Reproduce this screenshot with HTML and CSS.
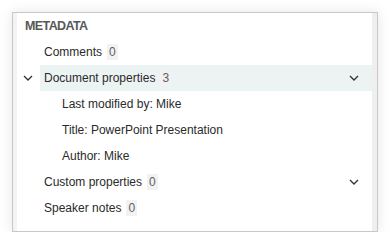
FILE: index.html
```html
<!DOCTYPE html>
<html>
<head>
<meta charset="utf-8">
<link rel="stylesheet" href="styles.css">
</head>
<body>
<div class="panel">
  <div class="inner">
    <div class="heading">METADATA</div>
    <div class="row">
      <span class="toggle"></span>
      <div class="item"><span class="label">Comments</span><span class="badge">0</span></div>
    </div>
    <div class="row">
      <span class="toggle"><svg width="10" height="6" viewBox="0 0 10 6"><path d="M1 1l4 4 4-4" fill="none" stroke="#323130" stroke-width="1.3"/></svg></span>
      <div class="item selected"><span class="label">Document properties</span><span class="badge">3</span>
        <span class="chev"><svg width="10" height="6" viewBox="0 0 10 6"><path d="M1 1l4 4 4-4" fill="none" stroke="#323130" stroke-width="1.3"/></svg></span>
      </div>
    </div>
    <div class="row sub"><span class="toggle"></span><div class="item"><span class="label">Last modified by: Mike</span></div></div>
    <div class="row sub"><span class="toggle"></span><div class="item"><span class="label">Title: PowerPoint Presentation</span></div></div>
    <div class="row sub"><span class="toggle"></span><div class="item"><span class="label">Author: Mike</span></div></div>
    <div class="row">
      <span class="toggle"></span>
      <div class="item"><span class="label">Custom properties</span><span class="badge">0</span>
        <span class="chev"><svg width="10" height="6" viewBox="0 0 10 6"><path d="M1 1l4 4 4-4" fill="none" stroke="#323130" stroke-width="1.3"/></svg></span>
      </div>
    </div>
    <div class="row">
      <span class="toggle"></span>
      <div class="item"><span class="label">Speaker notes</span><span class="badge">0</span></div>
    </div>
  </div>
</div>
</body>
</html>
```
FILE: styles.css
```css
html, body {
  margin: 0;
  padding: 0;
  background: #ffffff;
}
body {
  font-family: "Liberation Sans", Arial, sans-serif;
  font-size: 12px;
  color: #2b2a29;
}
.panel {
  margin: 12px 0 0 12px;
  width: 364px;
  height: 218px;
  border: 1px solid #c8c8c8;
  box-shadow: 0 0 12px rgba(0, 0, 0, 0.10);
  background: #ffffff;
}
.inner {
  height: 100%;
  box-sizing: border-box;
  border-left: 4px solid #f3f3f3;
  border-right: 5px solid #efefef;
}
.heading {
  height: 26px;
  line-height: 27px;
  padding-left: 8px;
  font-weight: bold;
  color: #585858;
  font-size: 12.5px;
  letter-spacing: -0.6px;
}
.row {
  display: flex;
  height: 26px;
}
.toggle {
  width: 22px;
  flex: none;
  display: flex;
  align-items: center;
  justify-content: center;
  padding-right: 1px;
}
.item {
  flex: 1;
  display: flex;
  align-items: center;
  padding-left: 4px;
  padding-right: 13px;
}
.sub .item {
  padding-left: 22px;
}
.selected {
  background: #ebf3f3;
}
.badge {
  margin-left: 5px;
  background: #f2f2f2;
  color: #605e5c;
  padding: 0 2px;
  height: 16px;
  line-height: 16px;
}
.chev {
  margin-left: auto;
  display: flex;
  align-items: center;
}
```
